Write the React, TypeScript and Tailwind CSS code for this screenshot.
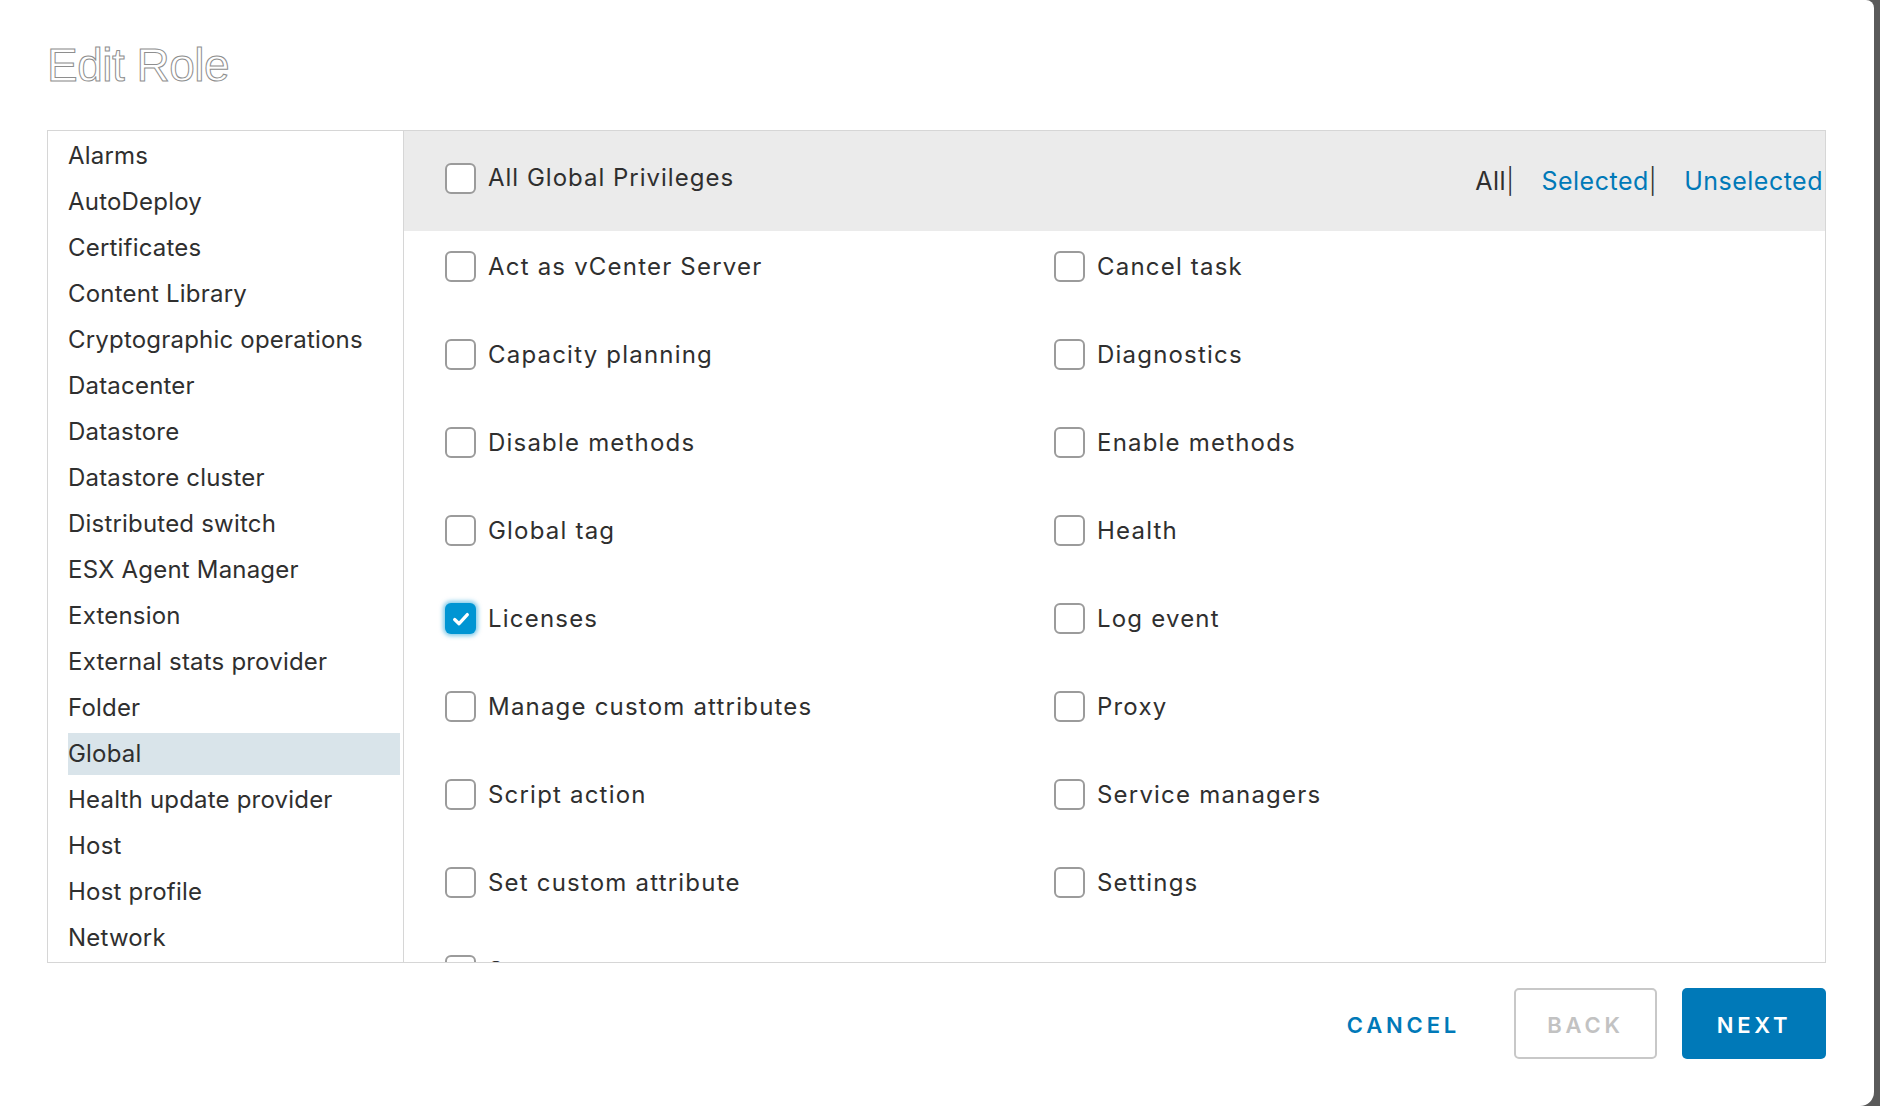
import React from "react";

const leftItems = [
  "Alarms",
  "AutoDeploy",
  "Certificates",
  "Content Library",
  "Cryptographic operations",
  "Datacenter",
  "Datastore",
  "Datastore cluster",
  "Distributed switch",
  "ESX Agent Manager",
  "Extension",
  "External stats provider",
  "Folder",
  "Global",
  "Health update provider",
  "Host",
  "Host profile",
  "Network",
  "Performance",
  "Permissions",
];

const privileges: { label: string; checked: boolean }[] = [
  { label: "Act as vCenter Server", checked: false },
  { label: "Cancel task", checked: false },
  { label: "Capacity planning", checked: false },
  { label: "Diagnostics", checked: false },
  { label: "Disable methods", checked: false },
  { label: "Enable methods", checked: false },
  { label: "Global tag", checked: false },
  { label: "Health", checked: false },
  { label: "Licenses", checked: true },
  { label: "Log event", checked: false },
  { label: "Manage custom attributes", checked: false },
  { label: "Proxy", checked: false },
  { label: "Script action", checked: false },
  { label: "Service managers", checked: false },
  { label: "Set custom attribute", checked: false },
  { label: "Settings", checked: false },
  { label: "System tag", checked: false },
];

function Check({ checked }: { checked: boolean }) {
  if (checked) {
    return (
      <div className="w-[31px] h-[31px] shrink-0 rounded-[6px] bg-[#0095d3] shadow-[0_0_4px_2px_rgba(0,149,211,0.5)] flex items-center justify-center">
        <svg width="22" height="22" viewBox="0 0 16 16" fill="none">
          <path
            d="M3.4 8.4 L6.6 11.4 L12.6 4.8"
            stroke="white"
            strokeWidth="2.4"
            strokeLinecap="round"
            strokeLinejoin="round"
          />
        </svg>
      </div>
    );
  }
  return (
    <div className="w-[31px] h-[31px] shrink-0 rounded-[6px] border-2 border-[#9b9b9b] bg-white" />
  );
}

export default function App() {
  return (
    <div className="w-[1880px] h-[1106px] bg-[#5a5a5a] overflow-hidden font-['Inter','Liberation_Sans',sans-serif] text-[#2f2f2f]">
      <div className="w-[1874px] h-[1106px] bg-white rounded-br-[14px] rounded-tr-[8px] pl-[47px] pr-[48px] pt-[42px] flex flex-col">
        <h1 className="h-[47px] text-[46px] leading-[47px] font-['Liberation_Sans',sans-serif] tracking-[-0.5px] text-transparent [-webkit-text-stroke:1px_#8e8e8e]">
          Edit Role
        </h1>

        <div className="mt-[41px] h-[833px] border border-[#d6d6d6] flex overflow-hidden">
          <div className="w-[356px] shrink-0 border-r border-[#d6d6d6] pt-[2px] pl-[20px] pr-[3px] overflow-hidden">
            {leftItems.map((item) => (
              <div key={item} className="h-[46px] py-[2px]">
                <div
                  className={`h-[42px] flex items-center text-[24px] tracking-[0.2px] whitespace-nowrap ${
                    item === "Global" ? "bg-[#d9e4ea]" : ""
                  }`}
                >
                  {item}
                </div>
              </div>
            ))}
          </div>

          <div className="flex-1 min-w-0 flex flex-col overflow-hidden">
            <div className="h-[100px] shrink-0 bg-[#ebebeb] flex items-start pl-[41px] pr-[2px] pt-[29px]">
              <div className="flex items-center gap-[12px]">
                <Check checked={false} />
                <span className="text-[24px] tracking-[1px]">All Global Privileges</span>
              </div>
              <div className="ml-auto flex items-center text-[25px] tracking-[0.5px] mt-[3px]">
                <span>All</span>
                <span className="font-light">|</span>
                <span className="ml-[27px] text-[#0079b8]">Selected</span>
                <span className="font-light">|</span>
                <span className="ml-[27px] text-[#0079b8]">Unselected</span>
              </div>
            </div>

            <div className="grid grid-cols-[609px_1fr] gap-y-[57px] pl-[41px] pt-[20px]">
              {privileges.map((p) => (
                <div key={p.label} className="h-[31px] flex items-center gap-[12px]">
                  <Check checked={p.checked} />
                  <span className="text-[24px] tracking-[1.2px] whitespace-nowrap">{p.label}</span>
                </div>
              ))}
            </div>
          </div>
        </div>

        <div className="mt-[25px] h-[71px] flex items-center justify-end">
          <button className="mr-[54px] pt-[3px] text-[22px] font-semibold tracking-[3.8px] text-[#0079b8]">
            CANCEL
          </button>
          <button className="w-[143px] h-[71px] pt-[3px] rounded-[5px] border-2 border-[#c8c8c8] text-[22px] font-semibold tracking-[3.8px] text-[#c2c2c2] bg-white">
            BACK
          </button>
          <button className="ml-[25px] w-[144px] h-[71px] pt-[3px] rounded-[5px] bg-[#0079b8] text-[22px] font-semibold tracking-[3.8px] text-white">
            NEXT
          </button>
        </div>
      </div>
    </div>
  );
}
